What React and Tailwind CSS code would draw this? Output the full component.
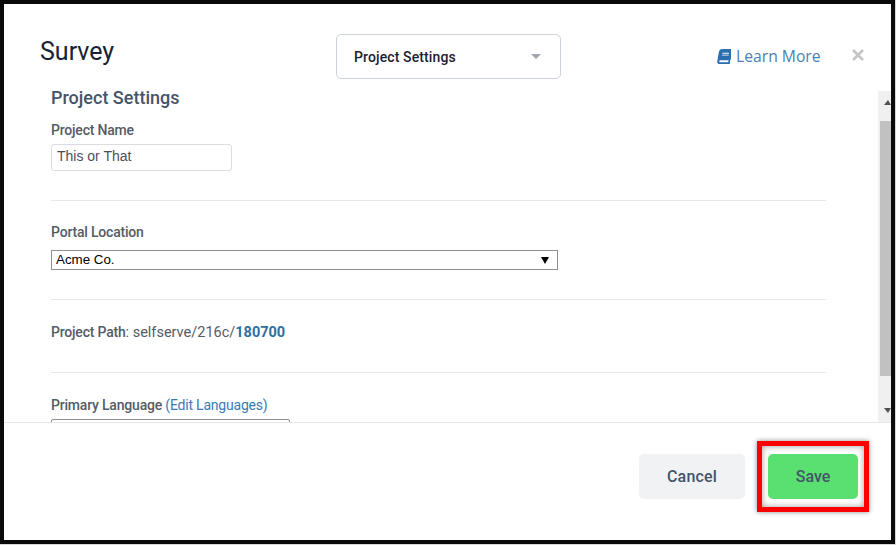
import React from "react";

function Book() {
  return (
    <svg viewBox="0 0 448 512" className="w-[15px] h-[15px] fill-[#2a6eb0]" aria-hidden="true">
      <path d="M448 360V24c0-13.3-10.7-24-24-24H96C43 0 0 43 0 96v320c0 53 43 96 96 96h328c13.300 0 24-10.700 24-24v-16c0-7.500-3.500-14.300-8.900-18.700-4.200-15.400-4.200-59.300 0-74.700 5.400-4.300 8.900-11.100 8.900-18.600zM128 134c0-3.300 2.700-6 6-6h212c3.300 0 6 2.700 6 6v20c0 3.300-2.700 6-6 6H134c-3.300 0-6-2.700-6-6v-20zm0 64c0-3.300 2.700-6 6-6h212c3.300 0 6 2.700 6 6v20c0 3.300-2.700 6-6 6H134c-3.300 0-6-2.700-6-6v-20zm253.400 250H96c-17.700 0-32-14.300-32-32 0-17.600 14.400-32 32-32h285.400c-1.900 17.100-1.900 46.900 0 64z" transform="skewX(-10) translate(85 0)" />
    </svg>
  );
}

function Rule() {
  return <div className="h-px bg-[#e8e8e8] w-[775px]" />;
}

export default function App() {
  return (
    <div className="w-[896px] h-[545px] bg-[#d8d8d8] overflow-hidden font-['Roboto',sans-serif]">
      <div className="w-[895px] h-[544px] border-4 border-[#0a0a0a] bg-white flex flex-col">
        <header className="h-[84px] shrink-0 flex items-start">
          <h1 className="ml-[36px] mt-[31px] w-[296px] text-[25px] leading-[34px] text-[#1a2233]">Survey</h1>
          <div className="mt-[30px] w-[225px] h-[45px] border border-[#cdd3da] rounded-[5px] flex items-center justify-between pl-[17px] pr-[19px]">
            <span className="text-[14px] pt-px font-medium tracking-[0.12px] text-[#1a2233]">Project Settings</span>
            <span className="w-0 h-0 border-x-[5px] border-x-transparent border-t-[5px] border-t-[#a0a6ad]" />
          </div>
          <div className="ml-[155px] mt-[41px] flex items-center gap-[5px] text-[#4a7fb5] text-[15.7px] leading-[22px] font-['Open_Sans',sans-serif]">
            <Book />
            <span>Learn More</span>
          </div>
          <span className="ml-[30px] mt-[44px]">
            <svg viewBox="0 0 14 14" className="w-[14px] h-[14px] stroke-[#c4c4c4]" strokeWidth="2.6" aria-hidden="true">
              <path d="M2 2l10 10M12 2L2 12" />
            </svg>
          </span>
        </header>

        <div className="h-[334px] shrink-0 flex">
          <main className="w-[874px] overflow-hidden pl-[47px]">
            <h2 className="text-[18px] leading-[20px] font-medium text-[#44546a]">Project Settings</h2>
            <div className="mt-[13px] text-[14px] tracking-[-0.2px] leading-[18px] font-medium text-[#555b66]">Project Name</div>
            <div className="mt-[5px] w-[181px] h-[27px] border border-[#dcdcdc] rounded-[3px] pl-[5px] text-[14px] leading-[23px] text-[#4a4f57] font-['Liberation_Sans',sans-serif]">This or That</div>
            <div className="mt-[29px]"><Rule /></div>
            <div className="mt-[22px] text-[14px] tracking-[-0.2px] leading-[18px] font-medium text-[#555b66]">Portal Location</div>
            <div className="mt-[9px] w-[507px] h-[20px] border border-[#8f8f8f] flex items-center justify-between pl-[4px] pr-[8px] text-[13.33px] text-black font-['Liberation_Sans',sans-serif]">
              <span>Acme Co.</span>
              <span className="w-0 h-0 border-x-[4px] border-x-transparent border-t-[7px] border-t-black" />
            </div>
            <div className="mt-[29px]"><Rule /></div>
            <div className="mt-[23px] text-[14.5px] leading-[18px] text-[#555b66]">
              <span className="font-medium text-[14px] tracking-[-0.2px]">Project Path</span>: selfserve/216c/<span className="font-bold text-[#2f6f9f]">180700</span>
            </div>
            <div className="mt-[30px]"><Rule /></div>
            <div className="mt-[23px] text-[14px] tracking-[-0.2px] leading-[18px] text-[#555b66]">
              <span className="font-medium">Primary Language</span> <span className="text-[#3a7ab8]">(Edit Languages)</span>
            </div>
            <div className="mt-[5px] w-[239px] h-[20px] border border-[#8f8f8f] rounded-t-[2px]" />
          </main>
          <div className="w-[13px] mt-[3px] bg-[#f0f0f0] flex flex-col items-end">
            <div className="h-[30px] w-full flex items-center justify-end pb-[7px]">
              <span className="w-0 h-0 border-l-[4px] border-r-[3px] border-x-transparent border-b-[5px] border-b-[#505050]" />
            </div>
            <div className="w-[11px] h-[255px] bg-[#c1c1c1]" />
            <div className="flex-1 w-full flex items-end justify-end pb-[9px]">
              <span className="w-0 h-0 border-l-[4px] border-r-[3px] border-x-transparent border-t-[5px] border-t-[#505050]" />
            </div>
          </div>
        </div>

        <footer className="flex-1 border-t border-[#e3e6ea] flex items-start justify-end pr-[22px]">
          <button className="mt-[31px] w-[106px] h-[45px] rounded-[5px] bg-[#f0f2f4] text-[16px] tracking-[0.2px] font-medium text-[#44546a]">Cancel</button>
          <div className="ml-[12px] mt-[18px] w-[112px] h-[71px] border-[5px] border-[#ff0000] shadow-[0_0_5px_rgba(0,0,0,0.45),inset_0_0_6px_rgba(0,0,0,0.4)] flex items-center justify-center">
            <button className="w-[90px] h-[45px] rounded-[5px] bg-[#5ae070] text-[16px] font-medium text-[#44546a]">Save</button>
          </div>
        </footer>
      </div>
    </div>
  );
}
